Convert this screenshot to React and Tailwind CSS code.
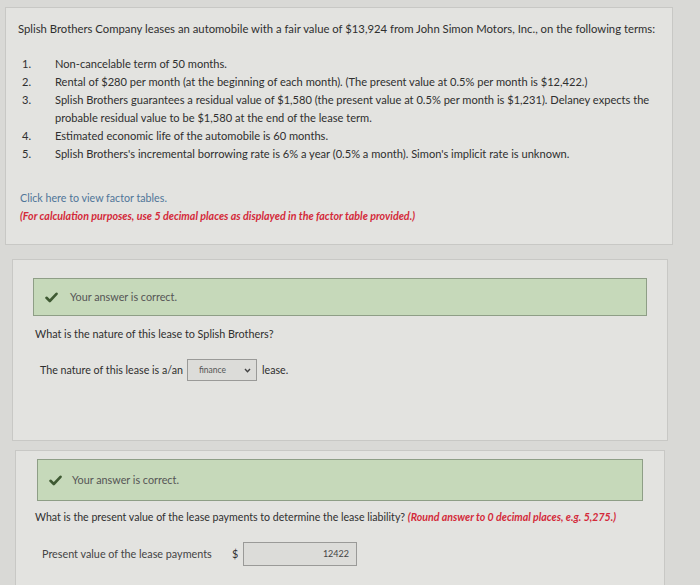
import React from "react";

const Check = () => (
  <svg width="13" height="11" viewBox="0 0 13 11" className="shrink-0">
    <path d="M1.5 5.8 L4.8 9 L11.5 1.8" fill="none" stroke="#3f5a33" strokeWidth="2.6" strokeLinecap="round" strokeLinejoin="round" />
  </svg>
);

const items = [
  ["1.", <>Non-cancelable term of 50 months.</>],
  ["2.", <>Rental of $280 per month (at the beginning of each month). (The present value at 0.5% per month is $12,422.)</>],
  ["3.", <>Splish Brothers guarantees a residual value of $1,580 (the present value at 0.5% per month is $1,231). Delaney expects the<br />probable residual value to be $1,580 at the end of the lease term.</>],
  ["4.", <>Estimated economic life of the automobile is 60 months.</>],
  ["5.", <>Splish Brothers's incremental borrowing rate is 6% a year (0.5% a month). Simon's implicit rate is unknown.</>],
];

export default function App() {
  return (
    <div className="w-[700px] h-[585px] overflow-hidden bg-[#d9d9d6] pt-[7px] text-[#2f2f2f]" style={{ fontFamily: "Lato, 'Open Sans', sans-serif" }}>
      {/* Card 1 */}
      <div className="ml-[5px] w-[668px] h-[238px] bg-[#e3e3e0] border border-[#c8c8c5] pl-[12px] pt-[14px]">
        <div className="text-[11.3px] leading-[14px] whitespace-nowrap">
          Splish Brothers Company leases an automobile with a fair value of $13,924 from John Simon Motors, Inc., on the following terms:
        </div>
        <ul className="mt-[19px] ml-[4px] text-[11.1px] leading-[18px]">
          {items.map(([n, t]) => (
            <li key={n} className="flex">
              <span className="w-[33px] shrink-0">{n}</span>
              <span className="whitespace-nowrap">{t}</span>
            </li>
          ))}
        </ul>
        <div className="mt-[26px] ml-[2px] text-[10.7px] leading-[18px]">
          <div className="text-[#4f7598]">Click here to view factor tables.</div>
          <div className="text-[#d42a3a] italic font-bold">(For calculation purposes, use 5 decimal places as displayed in the factor table provided.)</div>
        </div>
      </div>

      {/* Card 2 */}
      <div className="mt-[14px] ml-[12px] w-[656px] h-[182px] bg-[#e3e3e0] border border-[#c8c8c5] pt-[18px]">
        <div className="ml-[20px] w-[614px] h-[38px] bg-[#c6d9ba] border border-[#8e9e86] flex items-center gap-[12px] pl-[11px]">
          <Check />
          <span className="text-[10.8px] text-[#555]">Your answer is correct.</span>
        </div>
        <div className="mt-[10px] ml-[22px] text-[10.8px] leading-[16px]">What is the nature of this lease to Splish Brothers?</div>
        <div className="mt-[17px] ml-[27px] flex items-center text-[10.7px]">
          <span>The nature of this lease is a/an</span>
          <div className="ml-[4px] w-[70px] h-[22px] border border-[#9a9a98] bg-[#dcdcd9] flex items-center justify-between pl-[11px] pr-[5px]">
            <span className="text-[8.5px] text-[#555]">finance</span>
            <svg width="7" height="5" viewBox="0 0 7 5"><path d="M1 1 L3.5 3.8 L6 1" fill="none" stroke="#444" strokeWidth="1.4" /></svg>
          </div>
          <span className="ml-[5px]">lease.</span>
        </div>
      </div>

      {/* Card 3 */}
      <div className="mt-[9px] ml-[15px] w-[650px] h-[160px] bg-[#e3e3e0] border border-[#c8c8c5] pt-[8px]">
        <div className="ml-[21px] w-[606px] h-[42px] bg-[#c6d9ba] border border-[#8e9e86] flex items-center gap-[10px] pl-[11px]">
          <Check />
          <span className="text-[10.8px] text-[#555]">Your answer is correct.</span>
        </div>
        <div className="mt-[8px] ml-[19px] text-[10.6px] leading-[16px] whitespace-nowrap">
          What is the present value of the lease payments to determine the lease liability?{" "}
          <span className="text-[#d42a3a] italic font-bold">(Round answer to 0 decimal places, e.g. 5,275.)</span>
        </div>
        <div className="mt-[17px] ml-[26px] flex items-center text-[10.8px]">
          <span className="w-[190px] text-[#444]">Present value of the lease payments</span>
          <span className="w-[11px]">$</span>
          <div className="w-[114px] h-[24px] border border-[#9a9a98] bg-[#dcdcd9] flex items-center justify-end pr-[7px] text-[9px] text-[#444]">12422</div>
        </div>
      </div>
    </div>
  );
}
